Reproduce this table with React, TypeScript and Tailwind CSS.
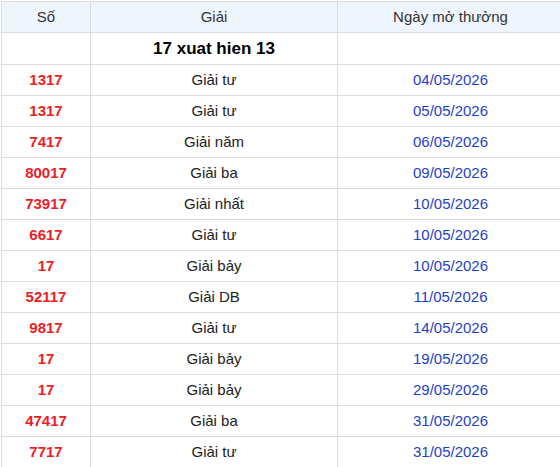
const rows = [
  { so: '1317', giai: 'Giải tư', ngay: '04/05/2026' },
  { so: '1317', giai: 'Giải tư', ngay: '05/05/2026' },
  { so: '7417', giai: 'Giải năm', ngay: '06/05/2026' },
  { so: '80017', giai: 'Giải ba', ngay: '09/05/2026' },
  { so: '73917', giai: 'Giải nhất', ngay: '10/05/2026' },
  { so: '6617', giai: 'Giải tư', ngay: '10/05/2026' },
  { so: '17', giai: 'Giải bảy', ngay: '10/05/2026' },
  { so: '52117', giai: 'Giải DB', ngay: '11/05/2026' },
  { so: '9817', giai: 'Giải tư', ngay: '14/05/2026' },
  { so: '17', giai: 'Giải bảy', ngay: '19/05/2026' },
  { so: '17', giai: 'Giải bảy', ngay: '29/05/2026' },
  { so: '47417', giai: 'Giải ba', ngay: '31/05/2026' },
  { so: '7717', giai: 'Giải tư', ngay: '31/05/2026' },
]

export default function App() {
  return (
    <div className="w-[560px] h-[467px] overflow-hidden bg-white pl-px pt-px font-['Liberation_Sans',Arial,sans-serif]">
      <table className="w-[562px] table-fixed border-collapse text-[15px] text-[#222]">
        <colgroup>
          <col className="w-[89px]" />
          <col className="w-[247px]" />
          <col className="w-[226px]" />
        </colgroup>
        <thead>
          <tr className="h-[31px] bg-[#eef5fd] text-[#333]">
            <th className="border border-[#dcdcdc] font-normal">Số</th>
            <th className="border border-[#dcdcdc] font-normal">Giải</th>
            <th className="border border-[#dcdcdc] font-normal">Ngày mở thưởng</th>
          </tr>
        </thead>
        <tbody>
          <tr className="h-[32px]">
            <td className="border border-[#dcdcdc]" />
            <td className="border border-[#dcdcdc] text-center text-[17px] font-bold text-black">17 xuat hien 13</td>
            <td className="border border-[#dcdcdc]" />
          </tr>
          {rows.map((r, i) => (
            <tr key={i} className="h-[31px]">
              <td className="border border-[#dcdcdc] text-center font-bold text-[#ee1c25]">{r.so}</td>
              <td className="border border-[#dcdcdc] text-center">{r.giai}</td>
              <td className="border border-[#dcdcdc] text-center text-[#1f3fc6]">{r.ngay}</td>
            </tr>
          ))}
        </tbody>
      </table>
    </div>
  )
}
